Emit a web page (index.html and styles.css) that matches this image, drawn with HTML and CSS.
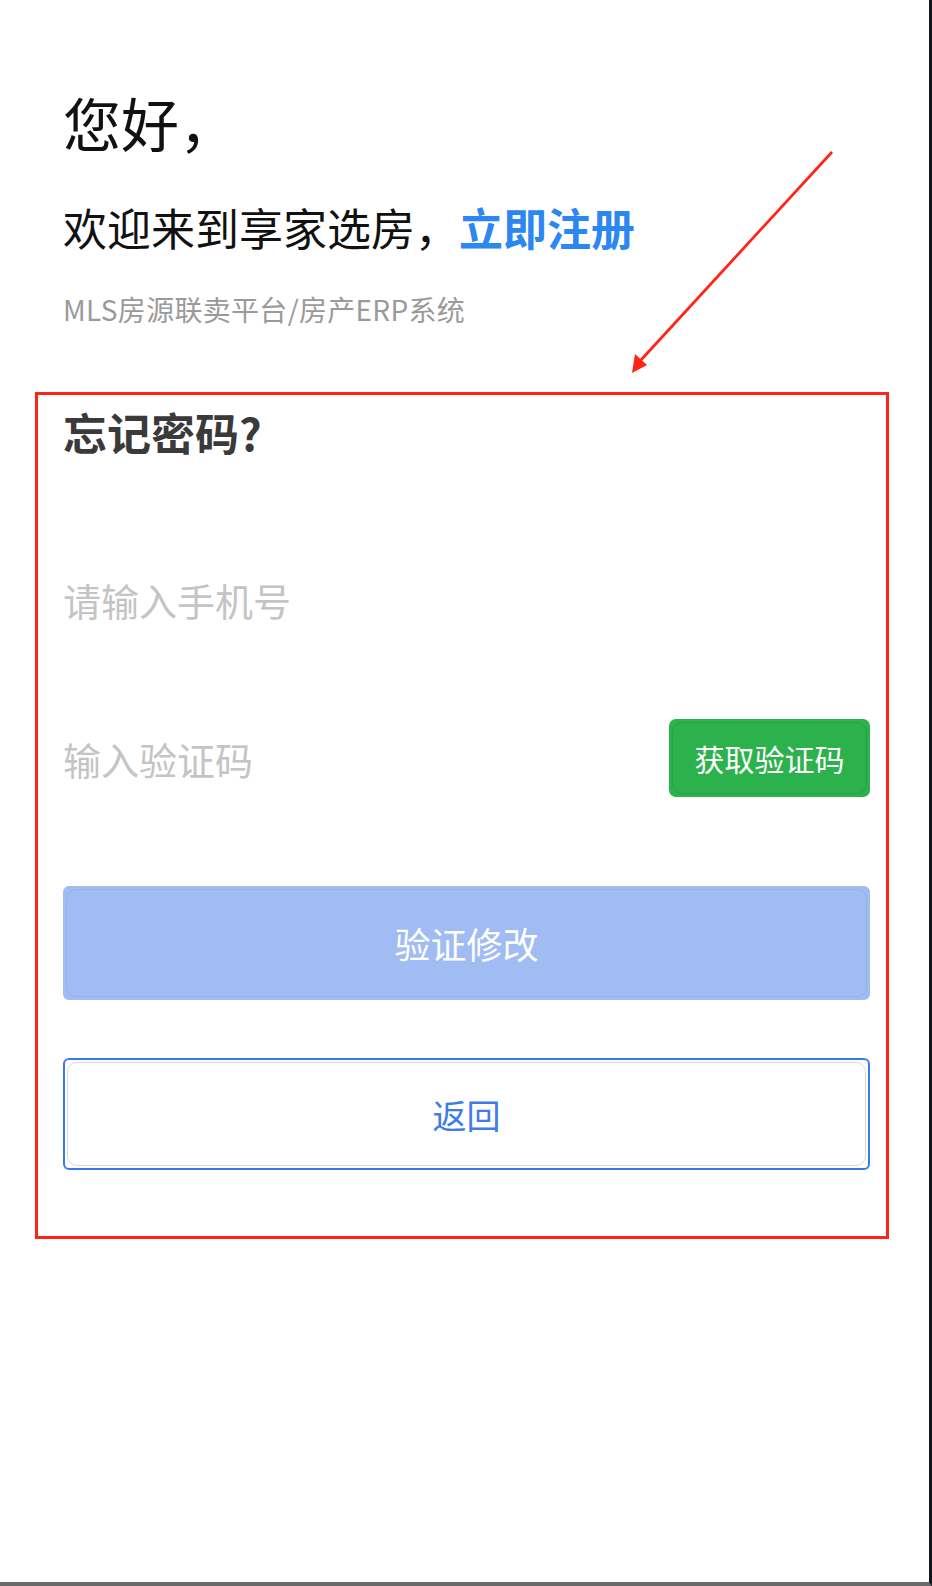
FILE: index.html
```html
<!DOCTYPE html>
<html lang="zh-CN">
	<head>
		<meta charset="UTF-8" />
		<meta name="viewport" content="width=device-width, initial-scale=1.0" />
		<title>忘记密码</title>
		<link rel="stylesheet" href="styles.css">
	</head>
	<body>
		<div class="screen">
			<h1 class="hello">您好，</h1>
			<p class="welcome">欢迎来到享家选房，<a href="#" class="register">立即注册</a></p>
			<p class="slogan">MLS房源联卖平台/房产ERP系统</p>

			<!-- annotation arrow -->
			<svg class="arrow" width="932" height="400" viewBox="0 0 932 400">
				<line x1="832" y1="152" x2="641" y2="360" stroke="#ff2418" stroke-width="2.8" />
				<polygon points="632,373 635,354 647,365" fill="#ff2418" />
			</svg>

			<form class="reset-box" id="reset-form">
				<h2 class="reset-title">忘记密码?</h2>
				<div class="field field-phone">
					<input type="tel" name="phone" placeholder="请输入手机号" />
				</div>
				<div class="field field-code">
					<input type="text" name="code" placeholder="输入验证码" />
					<button type="button" class="btn-code">获取验证码</button>
				</div>
				<button type="submit" class="btn btn-submit" disabled>验证修改</button>
				<button type="button" class="btn btn-back">返回</button>
			</form>
		</div>
	</body>
</html>
```

FILE: styles.css
```css
html,
body {
	margin: 0;
	padding: 0;
	background: #ffffff;
}
body {
	font-family: "Noto Sans CJK SC", "Noto Sans", sans-serif;
	color: #111111;
}
.screen {
	position: relative;
	box-sizing: border-box;
	height: 1586px;
	padding: 93px 0 0 63px;
	border-right: 3px solid #13131b;
	border-bottom: 4px solid #6a6a6a;
}
.hello {
	margin: 0;
	font-size: 58px;
	font-weight: 400;
	line-height: 1;
}
.welcome {
	margin: 54px 0 0;
	font-size: 44px;
	line-height: 1;
}
.register {
	color: #2d87f0;
	font-weight: 700;
	text-decoration: none;
}
.slogan {
	margin: 46px 0 0;
	font-size: 28px;
	line-height: 1;
	letter-spacing: 0.3px;
	color: #9a9a9a;
}
.arrow {
	position: absolute;
	top: 0;
	left: 0;
}
.reset-box {
	box-sizing: border-box;
	width: 854px;
	margin: 69px 0 0 -28px;
	padding: 15px 16px 66px 25px;
	border: 3px solid #ff2418;
}
.reset-title {
	margin: 0;
	font-size: 44px;
	font-weight: 700;
	line-height: 1;
	color: #3a3a3a;
}
.field {
	display: flex;
	align-items: center;
	justify-content: space-between;
	height: 100px;
}
.field-phone {
	margin-top: 95px;
}
.field-code {
	margin-top: 59px;
}
.field input {
	flex: 1;
	min-width: 0;
	padding: 0;
	border: none;
	outline: none;
	background: transparent;
	font-family: inherit;
	font-size: 38px;
	color: #333333;
}
.field input::placeholder {
	color: #c4c4c4;
}
.btn-code {
	position: relative;
	width: 201px;
	height: 78px;
	padding: 0;
	border: none;
	border-radius: 7px;
	background: #2bb24c;
	color: #ffffff;
	font-family: inherit;
	font-size: 30px;
}
.btn-code::before,
.btn::before {
	content: "";
	position: absolute;
	top: 3px;
	left: 3px;
	right: 3px;
	bottom: 3px;
	border-radius: 10px;
	border: 1px solid #27a144;
}
.btn {
	position: relative;
	display: block;
	width: 807px;
	padding: 0;
	border-radius: 6px;
	font-family: inherit;
	font-size: 36px;
}
.btn-submit {
	height: 114px;
	margin-top: 78px;
	border: none;
	background: #a0bcf3;
	color: #ffffff;
}
.btn-submit::before {
	border-color: #96b1e6;
}
.btn-back {
	height: 112px;
	margin-top: 58px;
	border: 2px solid #3b7be9;
	background: #ffffff;
	color: #3f7ce6;
	font-size: 34px;
}
.btn-back::before {
	top: 2px;
	left: 2px;
	right: 2px;
	bottom: 2px;
	border-color: #d9d9d9;
}
```
